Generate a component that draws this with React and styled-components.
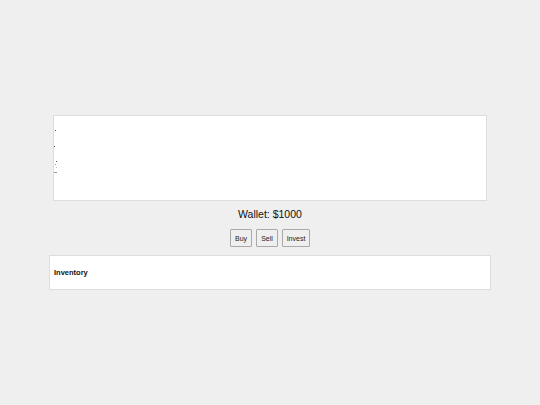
import React from 'react'
import styled, { createGlobalStyle } from 'styled-components'

const GlobalStyle = createGlobalStyle`
    html, body {
        margin: 0;
        padding: 0;
        background-color: #efefef;
        font-family: "Liberation Sans", Arial, sans-serif;
    }
`

const Page = styled.div`
    min-height: 405px;
    display: flex;
    flex-direction: column;
    align-items: center;
    justify-content: center;
`

const ChartBox = styled.div`
    width: 432px;
    height: 84px;
    background-color: white;
    border: 1px solid #dddddd;
`

const ChartSvg = styled.svg`
    display: block;
    width: 100%;
    height: 100%;
`

const Wallet = styled.div`
    margin-top: 7px;
    font-size: 10.5px;
    line-height: 13px;
    color: #111;
`

const ButtonRow = styled.div`
    display: flex;
    gap: 4px;
    margin-top: 8px;
`

const ActionButton = styled.button`
    height: 18px;
    width: ${p => p.$w}px;
    padding: 0;
    font-family: "Liberation Sans", Arial, sans-serif;
    font-size: 7px;
    color: #222;
    background-color: #efefef;
    border: 1px solid #a9a9a9;
    border-radius: 1px;
`

const Inventory = styled.div`
    margin-top: 8px;
    width: 436px;
    height: 33px;
    background-color: white;
    border: 1px solid #dddddd;
    display: flex;
    align-items: center;
    padding-left: 4px;
`

const InventoryTitle = styled.h3`
    margin: 0;
    font-size: 7.5px;
    font-weight: bold;
    color: #111;
`

export default function App() {
    return (
        <>
            <GlobalStyle />
            <Page>
                <ChartBox>
                    <ChartSvg viewBox="0 0 432 84">
                        <rect x="1" y="14" width="1" height="1" fill="#555" />
                        <rect x="0" y="30" width="1" height="1" fill="#555" />
                        <rect x="2" y="45" width="1" height="1" fill="#555" />
                        <rect x="1" y="48" width="1" height="1" fill="#999" />
                        <rect x="2" y="51" width="1" height="1" fill="#bbb" />
                        <rect x="0" y="56" width="3" height="1" fill="#999" />
                    </ChartSvg>
                </ChartBox>
                <Wallet>Wallet: $1000</Wallet>
                <ButtonRow>
                    <ActionButton $w={22}>Buy</ActionButton>
                    <ActionButton $w={22}>Sell</ActionButton>
                    <ActionButton $w={28}>Invest</ActionButton>
                </ButtonRow>
                <Inventory>
                    <InventoryTitle>Inventory</InventoryTitle>
                </Inventory>
            </Page>
        </>
    )
}
